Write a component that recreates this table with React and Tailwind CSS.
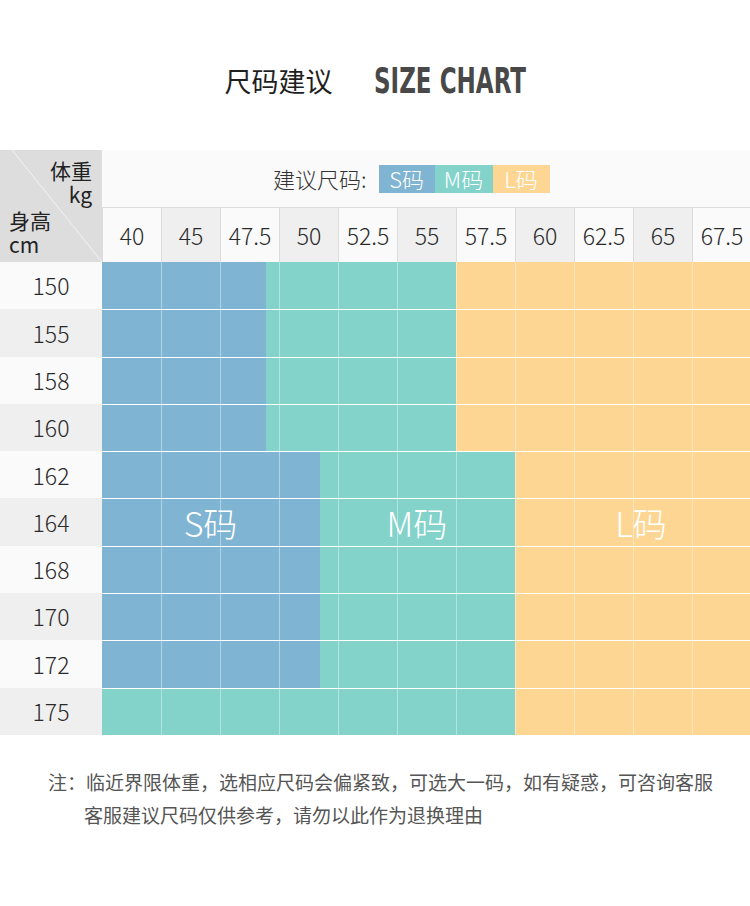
import React from "react";

const S = "#80b4d3";
const M = "#83d3cb";
const L = "#fed694";

const weights = ["40", "45", "47.5", "50", "52.5", "55", "57.5", "60", "62.5", "65", "67.5"];

// each cell: a colour, or a split [left colour, left px, right colour]
const topBand = [S, S, [S, 45, M], M, M, M, L, L, L, L, L];
const midBand = [S, S, S, [S, 40, M], M, M, M, L, L, L, L];
const lastBand = [M, M, M, M, M, M, M, L, L, L, L];

const rows = [
  { h: "150", cells: topBand },
  { h: "155", cells: topBand },
  { h: "158", cells: topBand },
  { h: "160", cells: topBand },
  { h: "162", cells: midBand },
  { h: "164", cells: midBand, labels: true },
  { h: "168", cells: midBand },
  { h: "170", cells: midBand },
  { h: "172", cells: midBand },
  { h: "175", cells: lastBand },
];

const cjk = { fontFamily: '"Noto Sans CJK SC", "Noto Sans", sans-serif' };

const Cell = ({ c, first }) => {
  if (Array.isArray(c)) {
    return (
      <div
        className={`w-[59px] shrink-0 flex ${first ? "" : "border-l border-white/40"}`}
        style={{ backgroundColor: c[0] }}
      >
        <div style={{ width: c[1] }} />
        <div className="flex-1" style={{ backgroundColor: c[2] }} />
      </div>
    );
  }
  return (
    <div
      className={`w-[59px] shrink-0 ${first ? "" : "border-l border-white/40"}`}
      style={{ backgroundColor: c }}
    />
  );
};

export default function App() {
  return (
    <div className="w-[750px] min-h-[906px] bg-white overflow-hidden" style={cjk}>
      {/* Title */}
      <div className="h-[150px] pt-[12px] flex items-center justify-center">
        <span className="text-[27px] text-[#1f1f1f]">尺码建议</span>
        <span
          className="inline-block text-[36px] font-bold text-[#484848] scale-x-[0.64] origin-left w-[152px] ml-[41px] whitespace-nowrap"
          style={{ fontFamily: '"DejaVu Sans", sans-serif' }}
        >
          SIZE CHART
        </span>
      </div>

      {/* Table head */}
      <div className="flex">
        <div className="relative w-[102px] h-[112px] shrink-0 bg-[#dddddd] text-[21px] leading-[24px] text-[#222]">
          <svg className="absolute inset-0" width="102" height="112">
            <line x1="12" y1="0" x2="102" y2="112" stroke="#f2f2f2" strokeWidth="1" />
          </svg>
          <div className="relative pt-[8px] pr-[10px] text-right">
            <div>体重</div>
            <div>kg</div>
          </div>
          <div className="relative pl-[9px] pt-[2px]">
            <div>身高</div>
            <div>cm</div>
          </div>
        </div>
        <div className="flex-1 flex flex-col">
          <div className="h-[58px] bg-[#fafafa] flex items-center pl-[171px] border-b border-[#dcdcdc]">
            <span className="text-[22px] font-light text-[#333] mr-[12px]">建议尺码:</span>
            <span className="h-[28px] w-[56px] flex items-center justify-center text-white text-[22px] font-light bg-[#80b4d3]">S码</span>
            <span className="h-[28px] w-[58px] flex items-center justify-center text-white text-[22px] font-light bg-[#83d3cb]">M码</span>
            <span className="h-[28px] w-[57px] flex items-center justify-center text-white text-[22px] font-light bg-[#fed694]">L码</span>
          </div>
          <div className="h-[54px] flex">
            {weights.map((w, i) => (
              <div
                key={w}
                className={`w-[59px] shrink-0 flex items-center justify-center text-[23px] font-light text-[#2a2a2a] border-l border-[#dddddd] ${
                  i % 2 ? "bg-[#efefef]" : "bg-[#fafafa]"
                }`}
              >
                {w}
              </div>
            ))}
          </div>
        </div>
      </div>

      {/* Table body */}
      {rows.map((r, ri) => (
        <div key={r.h} className="flex h-[47.3px]">
          <div
            className={`w-[102px] shrink-0 flex items-center justify-center text-[23px] font-light text-[#2a2a2a] ${
              ri % 2 ? "bg-[#efefef]" : "bg-[#fafafa]"
            }`}
          >
            {r.h}
          </div>
          <div className={`relative flex flex-1 ${ri ? "border-t border-white/40" : ""}`}>
            {r.cells.map((c, ci) => (
              <Cell key={ci} c={c} first={ci === 0} />
            ))}
            {r.labels && (
              <div className="absolute inset-0 flex items-center text-white text-[34px] font-light">
                <div className="w-[217px] shrink-0 text-center">S码</div>
                <div className="w-[196px] shrink-0 text-center">M码</div>
                <div className="w-[252px] shrink-0 text-center">L码</div>
              </div>
            )}
          </div>
        </div>
      ))}

      {/* Note */}
      <div className="pt-[30px] pl-[48px] text-[19px] leading-[33px] text-[#555]">
        <div>注：临近界限体重，选相应尺码会偏紧致，可选大一码，如有疑惑，可咨询客服</div>
        <div className="pl-[36px]">客服建议尺码仅供参考，请勿以此作为退换理由</div>
      </div>
    </div>
  );
}
